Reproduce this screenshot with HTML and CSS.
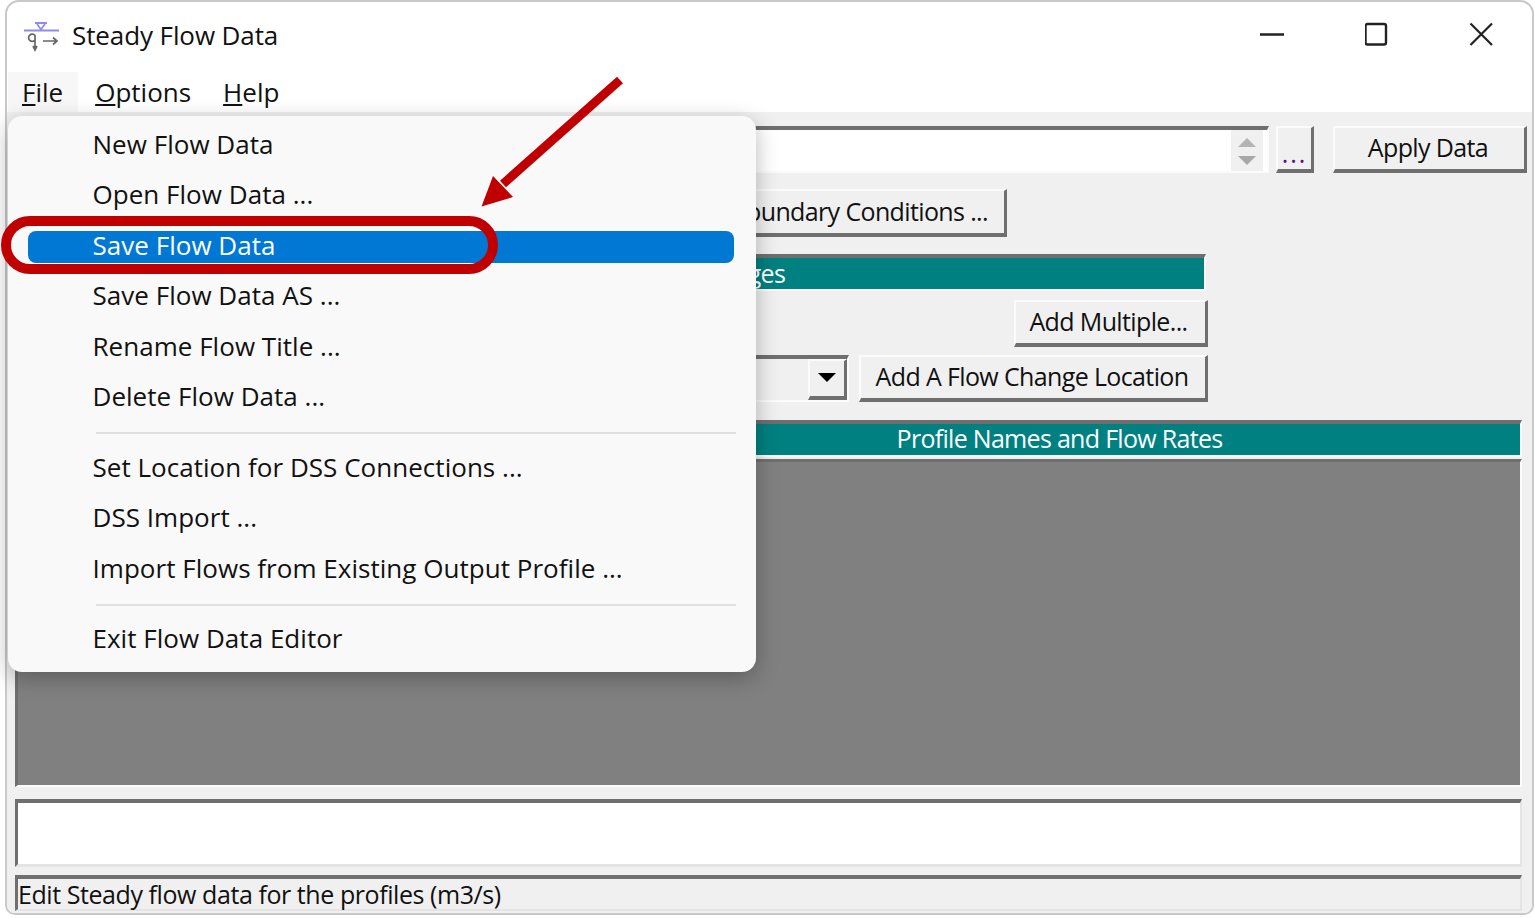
FILE: index.html
```html
<!DOCTYPE html>
<html lang="en">
<head>
    <meta charset="UTF-8">
    <meta name="viewport" content="width=device-width, initial-scale=1.0">
    <title>Steady Flow Data</title>
    <link rel="stylesheet" href="styles.css">
</head>
<body>
    <div class="window">
        <div class="titlebar">
            <svg class="app-icon" width="36" height="32" viewBox="0 0 36 32" fill="none">
                <path d="M0 9.5H35" stroke="#8f8cf0" stroke-width="2"/>
                <path d="M11 2H23M13 3L17 8.5L21 3" stroke="#8f8cf0" stroke-width="1.8"/>
                <path d="M11 14.5A3.6 3.6 0 1 0 11 19M11 14V27M9 25L11 29L13 25" stroke="#666" stroke-width="1.7"/>
                <path d="M19 20H33M29 16.5L33 20L29 23.5" stroke="#666" stroke-width="1.7"/>
            </svg>
            <span class="title">Steady Flow Data</span>
            <div class="controls">
                <svg width="24" height="24" viewBox="0 0 24 24"><path d="M0 12.5H24" stroke="#222" stroke-width="2.4"/></svg>
                <svg width="24" height="24" viewBox="0 0 24 24" fill="none"><rect x="0.5" y="2" width="20.5" height="20.5" rx="2" stroke="#222" stroke-width="2.4"/></svg>
                <svg width="24" height="24" viewBox="0 0 24 24"><path d="M1.5 1.5L23 23M23 1.5L1.5 23" stroke="#222" stroke-width="2.2"/></svg>
            </div>
        </div>

        <div class="menubar">
            <span class="menu-title active"><u>F</u>ile</span>
            <span class="menu-title"><u>O</u>ptions</span>
            <span class="menu-title"><u>H</u>elp</span>
        </div>

        <div class="client">
            <div class="row plan-row">
                <div class="field">
                    <div class="spin">
                        <span class="spin-up"></span>
                        <span class="spin-down"></span>
                    </div>
                </div>
                <button class="btn dots">...</button>
                <button class="btn apply">Apply Data</button>
            </div>

            <div class="row boundary-row">
                <button class="btn boundary">Reach Boundary Conditions ...</button>
            </div>

            <div class="band changes">Locations of Flow Data Changes</div>

            <div class="row multiple-row">
                <button class="btn multiple">Add Multiple...</button>
            </div>

            <div class="row location-row">
                <div class="combo">
                    <button class="btn combo-arrow"><span></span></button>
                </div>
                <button class="btn add-location">Add A Flow Change Location</button>
            </div>

            <div class="band profiles">Profile Names and Flow Rates</div>
            <div class="grid-area"></div>
            <div class="note"></div>
            <div class="status">Edit Steady flow data for the profiles (m3/s)</div>
        </div>
    </div>

    <div class="dropdown">
        <div class="item">New Flow Data</div>
        <div class="item">Open Flow Data ...</div>
        <div class="item selected">Save Flow Data</div>
        <div class="item">Save Flow Data AS ...</div>
        <div class="item">Rename Flow Title ...</div>
        <div class="item">Delete Flow Data ...</div>
        <div class="separator"></div>
        <div class="item">Set Location for DSS Connections ...</div>
        <div class="item">DSS Import ...</div>
        <div class="item">Import Flows from Existing Output Profile ...</div>
        <div class="separator"></div>
        <div class="item">Exit Flow Data Editor</div>
    </div>

    <!-- red callout on top of the menu -->
    <svg class="callout" width="1535" height="918" viewBox="0 0 1535 918" fill="none">
        <rect x="6" y="221" width="487" height="48" rx="24" stroke="#c00000" stroke-width="10"/>
        <path d="M620 80L503 184" stroke="#c00000" stroke-width="9"/>
        <polygon points="481.5,206.5 493,176 513,197" fill="#c00000"/>
    </svg>
</body>
</html>
```

FILE: styles.css
```css
* {
    box-sizing: border-box;
}
html, body {
    margin: 0;
    height: 100%;
    overflow: hidden;
}
body {
    background-color: #fff;
    font-family: "Open Sans", "Noto Sans", sans-serif;
    color: #111;
    padding: 0 0 3px 5px;
}
.window {
    height: 100%;
    width: 1529px;
    display: flex;
    flex-direction: column;
    background-color: #fff;
    border: 2px solid #c9c9c9;
    border-radius: 14px 14px 10px 10px;
    overflow: hidden;
}

/* title bar */
.titlebar {
    height: 70px;
    flex-shrink: 0;
    display: flex;
    align-items: center;
    padding: 0 39px 4px 17px;
}
.app-icon {
    margin-top: 4px;
}
.title {
    font-size: 26px;
    margin-left: 12px;
    letter-spacing: -0.1px;
}
.controls {
    margin-left: auto;
    display: flex;
    gap: 80.5px;
    margin-bottom: 2px;
}

/* menu bar */
.menubar {
    height: 40px;
    flex-shrink: 0;
    display: flex;
    align-items: center;
    font-size: 26px;
    letter-spacing: 0;
}
.menu-title {
    height: 40px;
    line-height: 41px;
    margin-right: 32px;
}
.menu-title:first-child {
    margin-left: 1px;
    padding: 0 15px 0 14px;
    margin-right: 17px;
}
.menu-title.active {
    background-color: #f7f7f7;
}

/* main dialog area */
.client {
    flex: 1;
    background-color: #f0f0f0;
    padding: 14px 5px 0 8px;
    font-size: 25px;
    letter-spacing: -0.63px;
}
.row {
    display: flex;
}
.btn {
    font: inherit;
    letter-spacing: inherit;
    color: #111;
    background-color: #f0f0f0;
    border-style: solid;
    border-width: 2px 3px 4px 2px;
    border-color: #fbfbfb #6f6f6f #6f6f6f #fbfbfb;
    padding: 0 0 3px;
    height: 47px;
}

.plan-row {
    height: 47px;
}
.field {
    flex: 1;
    background-color: #fff;
    border-style: solid;
    border-width: 4px 2px 2px 4px;
    border-color: #6f6f6f #fbfbfb #fbfbfb #6f6f6f;
    display: flex;
    justify-content: flex-end;
}
.spin {
    width: 32px;
    margin-right: 4px;
    background-color: #f0f0f0;
    display: flex;
    flex-direction: column;
    align-items: center;
    gap: 9px;
    padding-top: 8px;
}
.spin-up {
    border-style: solid;
    border-width: 0 9px 9px;
    border-color: transparent transparent #b4b4b4;
}
.spin-down {
    border-style: solid;
    border-width: 9px 9px 0;
    border-color: #a8a8a8 transparent transparent;
}
.dots {
    width: 38px;
    margin-left: 7px;
    color: #5b0a86;
    padding-top: 8px;
    letter-spacing: 2px;
}
.apply {
    width: 194px;
    margin-left: 19px;
    padding-right: 3px;
}

.boundary-row {
    margin-top: 16px;
}
.boundary {
    width: 506px;
    height: 48px;
    margin-left: 486px;
    text-align: right;
    padding-right: 16px;
}

.band {
    background-color: #008080;
    color: #fff;
    border-style: solid;
    border-width: 4px 2px 2px 2px;
    border-color: #6f6f6f #fbfbfb #fbfbfb #6f6f6f;
    line-height: 30px;
}
.changes {
    width: 1191px;
    height: 37px;
    margin-top: 17px;
    padding-left: 418px;
}
.multiple-row {
    margin-top: 9px;
    width: 1193px;
    justify-content: flex-end;
}
.multiple {
    width: 194px;
    padding-right: 4px;
}
.location-row {
    margin-top: 8px;
    width: 1193px;
}
.combo {
    width: 834px;
    height: 47px;
    background-color: #f0f0f0;
    border-style: solid;
    border-width: 4px 2px 2px 4px;
    border-color: #6f6f6f #fbfbfb #fbfbfb #6f6f6f;
    display: flex;
    justify-content: flex-end;
}
.combo-arrow {
    width: 39px;
    height: 41px;
    display: flex;
    align-items: center;
    justify-content: center;
}
.combo-arrow span {
    border-style: solid;
    border-width: 9px 9px 0;
    border-color: #000 transparent transparent;
}
.add-location {
    width: 349px;
    margin-left: 10px;
    padding-right: 2px;
}
.profiles {
    margin: 18px 5px 0 0;
    height: 37px;
    padding-left: 582px;
    text-align: center;
    line-height: 28px;
    letter-spacing: -0.7px;
}
.grid-area {
    margin: 2px 5px 0 0;
    height: 328px;
    background-color: #808080;
    border-style: solid;
    border-width: 3px 2px 2px 3px;
    border-color: #6f6f6f #fbfbfb #fbfbfb #6f6f6f;
}
.note {
    margin: 12px 5px 0 0;
    height: 68px;
    background-color: #fff;
    border-style: solid;
    border-width: 4px 2px 3px 3px;
    border-color: #6f6f6f #e4e4e4 #e4e4e4 #6f6f6f;
}
.status {
    margin: 8px 5px 0 0;
    height: 36px;
    background-color: #f0f0f0;
    border-style: solid;
    border-width: 4px 2px 2px 3px;
    border-color: #6f6f6f #e4e4e4 #e4e4e4 #6f6f6f;
    line-height: 31px;
    letter-spacing: -0.43px;
    white-space: nowrap;
}

/* File menu popup */
.dropdown {
    position: absolute;
    left: 8px;
    top: 116px;
    width: 748px;
    display: flex;
    flex-direction: column;
    gap: 18.4px;
    padding: 14px 0 16px;
    background-color: #f9f9f9;
    border-radius: 14px;
    box-shadow: 0 6px 22px rgba(0, 0, 0, 0.28);
    font-size: 26px;
    letter-spacing: 0.03px;
}
.item {
    height: 32px;
    line-height: 29px;
    margin: 0 22px 0 20px;
    padding-left: 64.5px;
    border-radius: 8px;
    white-space: nowrap;
}
.item.selected {
    background-color: #0078d4;
    color: #fff;
}
.separator {
    height: 2px;
    margin: 0 20px 0 88px;
    background-color: #e0e0e0;
}
.callout {
    position: absolute;
    left: 0;
    top: 0;
    pointer-events: none;
}
```
